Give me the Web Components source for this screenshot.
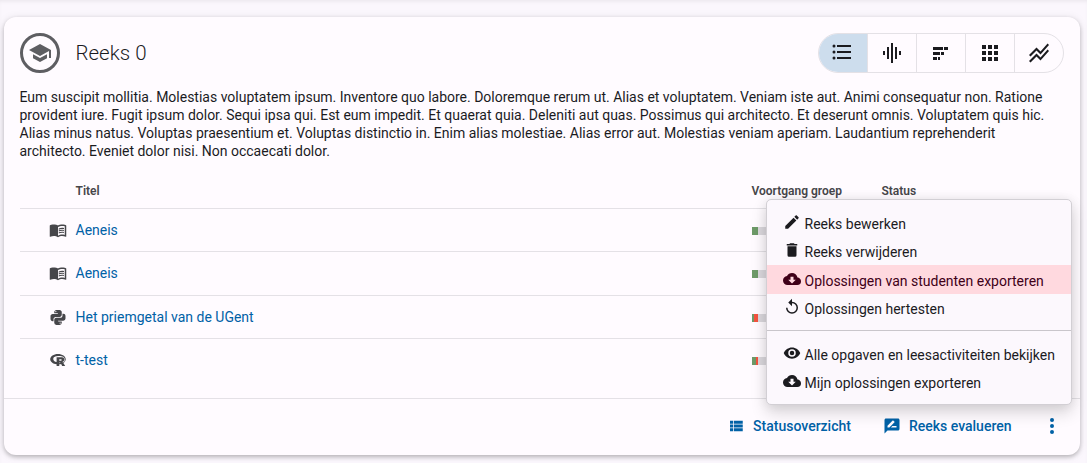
<!DOCTYPE html>
<html lang="nl">
<head>
<meta charset="utf-8">
<title>Reeks 0</title>
<style>
html,body{margin:0;height:463px;overflow:hidden}
body{background:#fbf7fd;font:14px/18px Roboto,sans-serif;color:#1b1b1f}
</style>
</head>
<body>
<series-page></series-page>
<script>
const icons={
school:'M12,3L1,9L12,15L21,10.09V17H23V9M5,13.18V17.18L12,21L19,17.18V13.18L12,17L5,13.18Z',
list:'M7,5H21V7H7V5M7,13V11H21V13H7M4,4.5A1.5,1.5 0 0,1 5.5,6A1.5,1.5 0 0,1 4,7.5A1.5,1.5 0 0,1 2.5,6A1.5,1.5 0 0,1 4,4.5M4,10.5A1.5,1.5 0 0,1 5.5,12A1.5,1.5 0 0,1 4,13.5A1.5,1.5 0 0,1 2.5,12A1.5,1.5 0 0,1 4,10.5M7,19V17H21V19H7M4,16.5A1.5,1.5 0 0,1 5.5,18A1.5,1.5 0 0,1 4,19.5A1.5,1.5 0 0,1 2.5,18A1.5,1.5 0 0,1 4,16.5Z',
violin:'M3 10h2v4H3zM7 6h2v12H7zM11 2h2v20h-2zM15 6h2v12h-2zM19 10h2v4h-2z',
stacked:'M4 6h10v3H4zM15 6h4v3h-4zM4 11h7v3H4zM12 11h3v3h-3zM4 16h4v3H4zM9 16h2v3H9z',
grid:'M16,20H20V16H16M16,14H20V10H16M10,8H14V4H10M16,8H20V4H16M10,14H14V10H10M4,14H8V10H4M4,20H8V16H4M10,20H14V16H10M4,8H8V4H4V8Z',
lines:'M2 19.99l7.5-7.51 4 4 7.09-7.97L22 9.92l-8.5 9.56-4-4-6 6.01L2 19.99zM3.5 15.49l6-6.01 4 4L22 3.92l-1.41-1.41-7.09 7.97-4-4L2 13.99l1.5 1.5z',
book:'M12 21.5C10.65 20.65 8.2 20 6.5 20C4.85 20 3.15 20.3 1.75 21.05C1.65 21.1 1.6 21.1 1.5 21.1C1.25 21.1 1 20.85 1 20.6V6C1.6 5.55 2.25 5.25 3 5C4.11 4.65 5.33 4.5 6.5 4.5C8.45 4.5 10.55 4.9 12 6C13.45 4.9 15.55 4.5 17.5 4.5C18.67 4.5 19.89 4.65 21 5C21.75 5.25 22.4 5.55 23 6V20.6C23 20.85 22.75 21.1 22.5 21.1C22.4 21.1 22.35 21.1 22.25 21.05C20.85 20.3 19.15 20 17.5 20C15.8 20 13.35 20.65 12 21.5M12 8V19.5C13.35 18.65 15.8 18 17.5 18C18.7 18 19.9 18.15 21 18.5V7C19.9 6.65 18.7 6.5 17.5 6.5C15.8 6.5 13.35 7.15 12 8M13 11.5C14.11 10.82 15.6 10.5 17.5 10.5C18.41 10.5 19.26 10.59 20 10.78V9.23C19.13 9.08 18.29 9 17.5 9C15.73 9 14.23 9.28 13 9.84V11.5M17.5 11.67C15.79 11.67 14.29 11.93 13 12.46V14.15C14.11 13.5 15.6 13.16 17.5 13.16C18.54 13.16 19.38 13.24 20 13.4V11.9C19.13 11.74 18.29 11.67 17.5 11.67M20 14.57C19.13 14.41 18.29 14.33 17.5 14.33C15.67 14.33 14.17 14.6 13 15.13V16.82C14.11 16.16 15.6 15.83 17.5 15.83C18.54 15.83 19.38 15.91 20 16.07V14.57Z',
python:'M19.14,7.5A2.86,2.86 0 0,1 22,10.36V14.14A2.86,2.86 0 0,1 19.14,17H12C12,17.39 12.32,17.96 12.71,17.96H17V19.64A2.86,2.86 0 0,1 14.14,22.5H9.86A2.86,2.86 0 0,1 7,19.64V15.89C7,14.31 8.28,13.04 9.86,13.04H15.11C16.69,13.04 17.96,11.76 17.96,10.18V7.5H19.14M14.86,19.29C14.46,19.29 14.14,19.59 14.14,20.18C14.14,20.77 14.46,20.89 14.86,20.89A0.71,0.71 0 0,0 15.57,20.18C15.57,19.59 15.25,19.29 14.86,19.29M4.86,17.5C3.28,17.5 2,16.22 2,14.64V10.86C2,9.28 3.28,8 4.86,8H12C12,7.61 11.68,7.04 11.29,7.04H7V5.36C7,3.78 8.28,2.5 9.86,2.5H14.14C15.72,2.5 17,3.78 17,5.36V9.11C17,10.69 15.72,11.96 14.14,11.96H8.89C7.31,11.96 6.04,13.24 6.04,14.82V17.5H4.86M9.14,5.71C9.54,5.71 9.86,5.41 9.86,4.82C9.86,4.23 9.54,4.11 9.14,4.11C8.75,4.11 8.43,4.23 8.43,4.82C8.43,5.41 8.75,5.71 9.14,5.71Z',
r:'M11.956 4.05c-5.694 0-10.354 3.106-10.354 6.947 0 3.396 3.686 6.212 8.531 6.813v2.205h3.53V17.82c.88-.093 1.699-.259 2.475-.497l1.43 2.692h3.996l-2.402-4.048c1.936-1.263 3.147-3.034 3.147-4.97 0-3.841-4.659-6.947-10.354-6.947m1.584 2.712c4.349 0 7.558 1.45 7.558 4.753 0 1.77-.952 3.013-2.505 3.779a1.081 1.081 0 0 1-.228-.156c-.373-.165-.994-.352-.994-.352s3.085-.227 3.085-3.302-3.23-3.127-3.23-3.127h-7.092v6.413c-2.64-.766-4.462-2.392-4.462-4.255 0-2.63 3.52-3.753 7.868-3.753m.156 4.12h2.143s.983-.05.983.974c0 1.004-.983 1.004-.983 1.004h-2.143v-1.977m-.041 4.56h.952c.186 0 .28.052.445.207.135.103.28.3.404.476-.57.073-1.17.104-1.801.104z',
pencil:'M20.71,7.04C21.1,6.65 21.1,6 20.71,5.63L18.37,3.29C18,2.9 17.35,2.9 16.96,3.29L15.12,5.12L18.87,8.87M3,17.25V21H6.75L17.81,9.93L14.06,6.18L3,17.25Z',
trash:'M19,4H15.5L14.5,3H9.5L8.5,4H5V6H19M6,19A2,2 0 0,0 8,21H16A2,2 0 0,0 18,19V7H6V19Z',
cloud:'M17,13L12,18L7,13H10V9H14V13M19.35,10.03C18.67,6.59 15.64,4 12,4C9.11,4 6.6,5.64 5.35,8.03C2.34,8.36 0,10.9 0,14A6,6 0 0,0 6,20H19A5,5 0 0,0 24,15C24,12.36 21.95,10.22 19.35,10.03Z',
replay:'M12,5V1L7,6L12,11V7A6,6 0 0,1 18,13A6,6 0 0,1 12,19A6,6 0 0,1 6,13H4A8,8 0 0,0 12,21A8,8 0 0,0 20,13A8,8 0 0,0 12,5Z',
eye:'M12,9A3,3 0 0,0 9,12A3,3 0 0,0 12,15A3,3 0 0,0 15,12A3,3 0 0,0 12,9M12,17A5,5 0 0,1 7,12A5,5 0 0,1 12,7A5,5 0 0,1 17,12A5,5 0 0,1 12,17M12,4.5C7,4.5 2.73,7.61 1,12C2.73,16.39 7,19.5 12,19.5C17,19.5 21.27,16.39 23,12C21.27,7.61 17,4.5 12,4.5Z',
viewlist:'M9,5V9H21V5M9,19H21V15H9M9,14H21V10H9M4,9H8V5H4M4,19H8V15H4M4,14H8V10H4V14Z',
review:'M20 2H4C2.9 2 2.01 2.9 2.01 4L2 22l4-4h14c1.1 0 2-.9 2-2V4c0-1.1-.9-2-2-2zM6 14v-2.47l6.88-6.88c.2-.2.51-.2.71 0l1.77 1.77c.2.2.2.51 0 .71L8.47 14H6zm12 0h-7.5l2-2H18v2z',
dots:'M12,16A2,2 0 0,1 14,18A2,2 0 0,1 12,20A2,2 0 0,1 10,18A2,2 0 0,1 12,16M12,10A2,2 0 0,1 14,12A2,2 0 0,1 12,14A2,2 0 0,1 10,12A2,2 0 0,1 12,10M12,4A2,2 0 0,1 14,6A2,2 0 0,1 12,8A2,2 0 0,1 10,6A2,2 0 0,1 12,4Z'
};
const define=(name,html)=>customElements.define(name,class extends HTMLElement{
  constructor(){super();this.attachShadow({mode:'open'});}
  connectedCallback(){this.shadowRoot.innerHTML=typeof html==='function'?html(this):html;}
});
define('mdi-icon',el=>`<style>:host{display:block;flex:none;line-height:0}svg{display:block;fill:currentColor}</style>
<svg width="${el.getAttribute('size')||18}" height="${el.getAttribute('size')||18}" viewBox="0 0 24 24"><path d="${icons[el.getAttribute('name')]}"/></svg>`);
define('view-switch',`<style>
:host{display:flex;box-sizing:border-box;width:246px;height:40px;border:1px solid #e4e1e6;border-radius:20px;overflow:hidden}
div{flex:none;width:48px;display:flex;align-items:center;justify-content:center;border-left:1px solid #e4e1e6}
.on{border:0;background:#cddded}
.on mdi-icon{margin:-2px 2px 0 0}
</style><div class="on"><mdi-icon name="list" size="24"></mdi-icon></div><div><mdi-icon name="violin" size="24"></mdi-icon></div><div><mdi-icon name="stacked" size="24"></mdi-icon></div><div><mdi-icon name="grid" size="24"></mdi-icon></div><div><mdi-icon name="lines" size="24"></mdi-icon></div>`);
define('progress-bar',el=>`<style>:host{display:flex;width:60px;height:8px;background:#dcd9de}
i{height:8px;background:#6d9a68}b{height:8px;background:#f4533f}</style><i style="width:${el.getAttribute('ok')}px"></i><b style="width:${el.getAttribute('bad')||0}px"></b>`);
define('activity-row',el=>`<style>
:host{display:grid;grid-template-columns:30px 25.5px 676.5px 130px 1fr;align-items:center;height:var(--h,43px);padding-bottom:var(--b,0);box-sizing:border-box;border-top:1px solid #e4e1e6}
mdi-icon{color:#46464a;margin-left:-1px}a{color:#0061a6}progress-bar{margin-top:1px}
</style><span></span><mdi-icon name="${el.getAttribute('icon')}"></mdi-icon><a><slot></slot></a><progress-bar ok="${el.getAttribute('ok')}" bad="${el.getAttribute('bad')||0}"></progress-bar>`);
define('menu-item',el=>`<style>
:host{display:flex;height:var(--h,28px);box-sizing:border-box;align-items:center;padding:0 16px;gap:3.5px;white-space:nowrap;color:#1b1b1f}
:host([active]){background:#ffd9df;color:#3f0018}
mdi-icon{margin-top:-2px}span{padding-top:2px}
</style><mdi-icon name="${el.getAttribute('icon')}"></mdi-icon><span><slot></slot></span>`);
define('action-menu',`<style>
:host{display:block;position:absolute;left:766px;top:199px;width:306px;height:206px;box-sizing:border-box;padding:9px 0;background:#fcf8fd;border:1px solid #d2cfd4;border-radius:5px;box-shadow:0 8px 16px rgba(0,0,0,.15),0 0 12px rgba(0,0,0,.08)}
hr{margin:8px 0 9px;border:0;border-top:1px solid #c9c6cb}
</style><menu-item icon="pencil">Reeks bewerken</menu-item><menu-item icon="trash">Reeks verwijderen</menu-item><menu-item icon="cloud" active style="--h:29px">Oplossingen van studenten exporteren</menu-item><menu-item icon="replay">Oplossingen hertesten</menu-item><hr><menu-item icon="eye">Alle opgaven en leesactiviteiten bekijken</menu-item><menu-item icon="cloud">Mijn oplossingen exporteren</menu-item>`);
define('series-card',`<style>
:host{display:flex;flex-direction:column;box-sizing:border-box;width:1076px;height:438px;background:#fffbff;border-radius:12px;box-shadow:0 2px 4px rgba(0,0,0,.22),0 1px 8px rgba(0,0,0,.1)}
header{display:flex;align-items:center;padding:16px 16px 0;height:40px}
.badge{box-sizing:border-box;width:40px;height:40px;border:3px solid #5e5e62;border-radius:50%;color:#5e5e62;display:flex;align-items:center;justify-content:center}
h2{font-weight:300;font-size:20.5px;line-height:24px;margin:0 auto 0 15.5px}
p{margin:15px 16.5px 0 15.5px;height:72px;letter-spacing:-.006px}
.head{display:grid;grid-template-columns:55.5px 676px 130px 1fr;margin:22px 16px 0;height:26px;font-size:12px;font-weight:600;color:#46464a}
.rows{display:block;padding:0 16px;height:190px}
footer{flex:1;border-top:1px solid #e4e1e6;display:flex;justify-content:flex-end;align-items:center;color:#0061a6;font-weight:500;padding:0 16.5px 2px}
footer span{margin-left:8px}
</style>
<header><div class="badge"><mdi-icon name="school" size="24"></mdi-icon></div><h2>Reeks 0</h2><view-switch></view-switch></header>
<p>Eum suscipit mollitia. Molestias voluptatem ipsum. Inventore quo labore. Doloremque rerum ut. Alias et voluptatem. Veniam iste aut. Animi consequatur non. Ratione provident iure. Fugit ipsum dolor. Sequi ipsa qui. Est eum impedit. Et quaerat quia. Deleniti aut quas. Possimus qui architecto. Et deserunt omnis. Voluptatem quis hic. Alias minus natus. Voluptas praesentium et. Voluptas distinctio in. Enim alias molestiae. Alias error aut. Molestias veniam aperiam. Laudantium reprehenderit architecto. Eveniet dolor nisi. Non occaecati dolor.</p>
<div class="head"><span></span><span>Titel</span><span>Voortgang groep</span><span>Status</span></div>
<div class="rows"><activity-row icon="book" ok="6">Aeneis</activity-row><activity-row icon="book" ok="6" style="--h:44px;--b:1px">Aeneis</activity-row><activity-row icon="python" ok="2" bad="4">Het priemgetal van de UGent</activity-row><activity-row icon="r" ok="4" bad="2">t-test</activity-row></div>
<footer><mdi-icon name="viewlist"></mdi-icon><span>Statusoverzicht</span><mdi-icon name="review" style="margin-left:32px"></mdi-icon><span>Reeks evalueren</span><mdi-icon name="dots" size="24" style="margin-left:28px"></mdi-icon></footer>`);
define('series-page',`<style>:host{display:block;box-sizing:border-box;position:relative;padding:17px 0 0 4px;height:463px;box-shadow:inset 0 3px 4px -2px rgba(0,0,0,.08)}</style><series-card></series-card><action-menu></action-menu>`);
</script>
</body>
</html>
